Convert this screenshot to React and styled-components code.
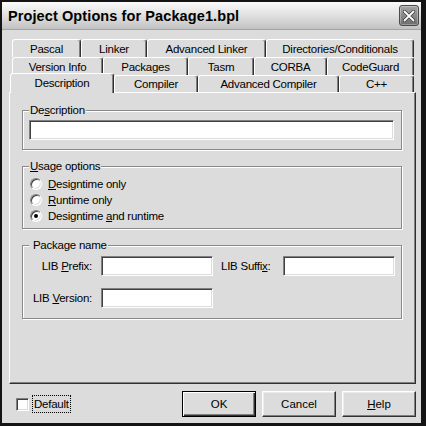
import React from 'react'
import styled, { createGlobalStyle } from 'styled-components'

const GlobalStyle = createGlobalStyle`
  html, body {
    margin: 0;
    padding: 0;
    background: #fff;
  }
`

const Window = styled.div`
  box-sizing: border-box;
  width: 426px;
  height: 426px;
  display: flex;
  flex-direction: column;
  background: #dcdcdc;
  border-style: solid;
  border-color: #141414;
  border-width: 2px 5px 3px 2px;
  font-family: 'Liberation Sans', Arial, sans-serif;
  font-size: 11.5px;
  letter-spacing: -0.25px;
  color: #000;
`

const TitleBar = styled.div`
  box-sizing: border-box;
  height: 28px;
  flex: none;
  display: flex;
  align-items: center;
  justify-content: space-between;
  padding: 0 2px 0 6px;
  background: linear-gradient(#fbfbfb, #dadada 60%, #c2c2c2);
  border-bottom: 1px solid #a4a4a4;
`

const Title = styled.span`
  font-size: 14.5px;
  font-weight: bold;
  letter-spacing: 0.1px;
`

const CloseButton = styled.div`
  box-sizing: border-box;
  width: 20px;
  height: 21px;
  display: flex;
  align-items: center;
  justify-content: center;
  border: 1px solid #4a4a4a;
  border-radius: 3px;
  background: linear-gradient(#a4a4a4, #6e6e6e);
  box-shadow: inset 0 0 0 1px rgba(255, 255, 255, 0.3);
`

const Body = styled.div`
  flex: 1;
  display: flex;
  flex-direction: column;
  padding: 9px 5px 0 7px;
  min-height: 0;
`

const TabStrip = styled.div`
  flex: none;
  display: flex;
  flex-direction: column;
`

const TabRow = styled.div`
  display: flex;
  align-items: flex-end;
  height: ${({ h }) => h}px;
  padding-left: 3px;
`

const Tab = styled.div`
  box-sizing: border-box;
  width: ${({ w }) => w}px;
  height: ${({ selected, h }) => (selected ? h + 3 : h)}px;
  margin: ${({ selected }) => (selected ? '0 0 -1px -2px' : '0')};
  position: relative;
  z-index: ${({ selected }) => (selected ? 2 : 1)};
  display: flex;
  align-items: center;
  justify-content: center;
  padding-bottom: ${({ selected }) => (selected ? '2px' : '0')};
  background: #dcdcdc;
  border-style: solid;
  border-width: 1px 1px 0 1px;
  border-color: #fff #303030 transparent #fff;
  border-radius: 3px 3px 0 0;
  box-shadow: inset -1px 0 0 #808080;
  white-space: nowrap;
`

const Panel = styled.div`
  flex: 1;
  display: flex;
  flex-direction: column;
  gap: 10px;
  padding: 11px 13px 0 12px;
  border-style: solid;
  border-width: 1px;
  border-color: #fff #303030 #303030 #fff;
  box-shadow: inset -1px -1px 0 #808080;
`

const GroupBox = styled.fieldset`
  margin: 0;
  min-width: 0;
  padding: ${({ pad }) => pad};
  border: 1px solid #8a8a8a;
  box-shadow: 1px 1px 0 #fff, inset 1px 1px 0 #fff;
`

const Legend = styled.legend`
  padding: 0 1px;
  line-height: 13px;
  background: #dcdcdc;
`

const Key = styled.span`
  text-decoration: underline;
`

const Field = styled.input`
  box-sizing: border-box;
  display: block;
  width: 100%;
  height: 20px;
  margin: 0;
  padding: 0 3px;
  background: #fff;
  border-style: solid;
  border-width: 1px;
  border-color: #808080 #fff #fff #808080;
  box-shadow: inset 1px 1px 0 #404040, inset -1px -1px 0 #dcdcdc;
  font: inherit;
  outline: none;
`

const RadioList = styled.div`
  display: flex;
  flex-direction: column;
`

const RadioRow = styled.label`
  display: flex;
  align-items: center;
  gap: 6px;
  height: 16px;
  padding-left: 1px;
`

const Radio = styled.span`
  box-sizing: border-box;
  position: relative;
  width: 12px;
  height: 12px;
  border-radius: 50%;
  border-style: solid;
  border-width: 1px;
  border-color: #808080 #fff #fff #808080;
  background: #fff;
  box-shadow: inset 1px 1px 0 #404040, inset -1px -1px 0 #dcdcdc;

  &::after {
    content: '';
    display: ${({ checked }) => (checked ? 'block' : 'none')};
    position: absolute;
    left: 3px;
    top: 3px;
    width: 4px;
    height: 4px;
    border-radius: 50%;
    background: #000;
  }
`

const NameGrid = styled.div`
  display: grid;
  grid-template-columns: 64px 112px 54px 112px;
  grid-auto-rows: 20px;
  column-gap: 8px;
  row-gap: 12px;
  align-items: center;
`

const FieldLabel = styled.span`
  text-align: ${({ align }) => align || 'right'};
  padding-right: 1px;
  white-space: nowrap;
`

const Footer = styled.div`
  box-sizing: border-box;
  flex: none;
  height: 39px;
  display: flex;
  align-items: flex-start;
  padding-top: 7px;
`

const CheckArea = styled.label`
  display: flex;
  align-items: center;
  margin: 5px 0 0 7px;
`

const CheckBox = styled.span`
  box-sizing: border-box;
  width: 13px;
  height: 13px;
  border-style: solid;
  border-width: 1px;
  border-color: #808080 #fff #fff #808080;
  background: #fff;
  box-shadow: inset 1px 1px 0 #404040, inset -1px -1px 0 #dcdcdc;
`

const FocusText = styled.span`
  margin-left: 4px;
  padding: 1px 1px;
  line-height: 14px;
  outline: 1px dotted #000;
`

const ButtonGroup = styled.div`
  margin-left: auto;
  display: flex;
  gap: 6px;
`

const Button = styled.button`
  box-sizing: border-box;
  width: 74px;
  height: 26px;
  margin: 0;
  padding: 0;
  font: inherit;
  color: #000;
  background: #dcdcdc;
  border-style: solid;
  border-width: 1px;
  border-color: ${({ primary }) => (primary ? '#000' : '#fff #303030 #303030 #fff')};
  box-shadow: ${({ primary }) =>
    primary
      ? 'inset 1px 1px 0 #fff, inset -1px -1px 0 #303030, inset -2px -2px 0 #808080'
      : 'inset -1px -1px 0 #808080, inset 1px 1px 0 #ececec'};
`

const tabRows = [
  {
    h: 18,
    tabs: [
      { label: 'Pascal', w: 69 },
      { label: 'Linker', w: 66 },
      { label: 'Advanced Linker', w: 119 },
      { label: 'Directories/Conditionals', w: 148 },
    ],
  },
  {
    h: 18,
    tabs: [
      { label: 'Version Info', w: 91 },
      { label: 'Packages', w: 85 },
      { label: 'Tasm', w: 66 },
      { label: 'CORBA', w: 73 },
      { label: 'CodeGuard', w: 87 },
    ],
  },
  {
    h: 17,
    tabs: [
      { label: 'Description', w: 104, selected: true },
      { label: 'Compiler', w: 84 },
      { label: 'Advanced Compiler', w: 141 },
      { label: 'C++', w: 75 },
    ],
  },
]

function CloseIcon() {
  return (
    <svg width="12" height="12" viewBox="0 0 12 12">
      <path d="M1.5 1.5 L10.5 10.5 M10.5 1.5 L1.5 10.5" stroke="#3a3a3a" strokeWidth="3.2" strokeLinecap="round" />
      <path d="M1.5 1.5 L10.5 10.5 M10.5 1.5 L1.5 10.5" stroke="#fff" strokeWidth="1.8" strokeLinecap="round" />
    </svg>
  )
}

function App() {
  return (
    <>
      <GlobalStyle />
      <Window>
        <TitleBar>
          <Title>Project Options for Package1.bpl</Title>
          <CloseButton>
            <CloseIcon />
          </CloseButton>
        </TitleBar>

        <Body>
          <TabStrip>
            {tabRows.map((row, i) => (
              <TabRow key={i} h={row.h}>
                {row.tabs.map((t) => (
                  <Tab key={t.label} w={t.w} h={row.h} selected={t.selected}>
                    {t.label}
                  </Tab>
                ))}
              </TabRow>
            ))}
          </TabStrip>

          <Panel>
            <GroupBox pad="3px 7px 9px 6px">
              <Legend>
                De<Key>s</Key>cription
              </Legend>
              <Field type="text" defaultValue="" />
            </GroupBox>

            <GroupBox pad="3px 7px 4px 6px">
              <Legend>
                <Key>U</Key>sage options
              </Legend>
              <RadioList>
                <RadioRow>
                  <Radio />
                  <span>
                    <Key>D</Key>esigntime only
                  </span>
                </RadioRow>
                <RadioRow>
                  <Radio />
                  <span>
                    <Key>R</Key>untime only
                  </span>
                </RadioRow>
                <RadioRow>
                  <Radio checked />
                  <span>
                    Designtime <Key>a</Key>nd runtime
                  </span>
                </RadioRow>
              </RadioList>
            </GroupBox>

            <GroupBox pad="4px 5px 10px 6px">
              <Legend>&nbsp;Package name</Legend>
              <NameGrid>
                <FieldLabel>
                  LIB <Key>P</Key>refix:
                </FieldLabel>
                <Field type="text" defaultValue="" />
                <FieldLabel align="left">
                  LIB Suffi<Key>x</Key>:
                </FieldLabel>
                <Field type="text" defaultValue="" />
                <FieldLabel>
                  LIB <Key>V</Key>ersion:
                </FieldLabel>
                <Field type="text" defaultValue="" />
              </NameGrid>
            </GroupBox>
          </Panel>

          <Footer>
            <CheckArea>
              <CheckBox />
              <FocusText>Default</FocusText>
            </CheckArea>
            <ButtonGroup>
              <Button primary>OK</Button>
              <Button>Cancel</Button>
              <Button>
                <Key>H</Key>elp
              </Button>
            </ButtonGroup>
          </Footer>
        </Body>
      </Window>
    </>
  )
}

export default App
